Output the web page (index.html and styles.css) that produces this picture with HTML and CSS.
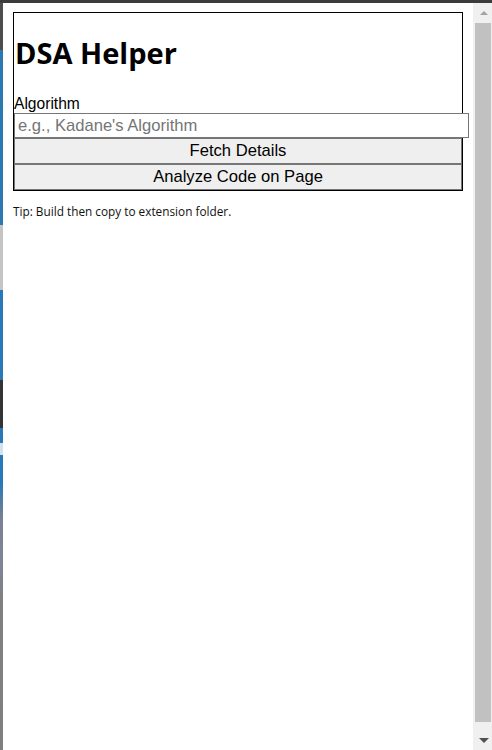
FILE: index.html
```html
<!DOCTYPE html>
<html lang="en">
<head>
<meta charset="utf-8">
<title>DSA Helper</title>
<link rel="stylesheet" href="styles.css">
</head>
<body>
<div class="frame">
  <div class="edge"></div>
  <div class="window">
    <div class="backdrop"></div>
    <main class="popup">
      <div class="panel">
        <h1 class="title">DSA Helper</h1>
        <label class="field-label" for="algo">Algorithm</label>
        <input class="field-input" id="algo" type="text" placeholder="e.g., Kadane's Algorithm">
        <button class="action" type="button">Fetch Details</button>
        <button class="action" type="button">Analyze Code on Page</button>
      </div>
      <p class="tip">Tip: Build then copy to extension folder.</p>
    </main>
    <div class="scrollbar">
      <div class="scroll-btn"><span class="arrow-up"></span></div>
      <div class="thumb"></div>
      <div class="scroll-gap"></div>
      <div class="scroll-btn"><span class="arrow-down"></span></div>
    </div>
  </div>
</div>
</body>
</html>
```

FILE: styles.css
```css
html, body {
  margin: 0;
  padding: 0;
  background: #ffffff;
}

.frame {
  width: 492px;
  height: 750px;
  display: flex;
  flex-direction: column;
  overflow: hidden;
}

.edge {
  height: 3px;
  background: #3c3c3c;
  flex: none;
}

.window {
  flex: 1;
  display: flex;
  min-height: 0;
}

.backdrop {
  width: 3px;
  flex: none;
  background: linear-gradient(to bottom,
    #4d4d4d 0px, #4d4d4d 47px,
    #2b78b3 47px, #2b78b3 222px,
    #c4c4c4 222px, #c4c4c4 287px,
    #2a79b6 287px, #2a79b6 377px,
    #343434 377px, #343434 425px,
    #2a79b6 425px, #2a79b6 440px,
    #cfe2ef 440px, #cfe2ef 452px,
    #2a79b6 452px, #2a79b6 480px,
    #7b8190 517px, #7e8596 560px,
    #808080 600px, #7f7f7f 747px);
}

.popup {
  flex: 1;
  min-width: 0;
  padding: 9px 10px 0 10px;
  background: #ffffff;
}

.panel {
  border: 1px solid #000000;
  display: flex;
  flex-direction: column;
  align-items: flex-start;
}

.title {
  font-family: "Open Sans", "Noto Sans", sans-serif;
  font-weight: 700;
  font-size: 29px;
  line-height: 36px;
  margin: 22px 0 24px 1px;
  color: #000000;
}

.field-label {
  font-family: "Liberation Sans", Arial, sans-serif;
  font-size: 15.6px;
  line-height: 18px;
  color: #000000;
}

.field-input {
  box-sizing: border-box;
  width: 455px;
  flex: none;
  height: 25px;
  margin: 0;
  padding: 1px 2px 1px 3px;
  border: 1px solid #767676;
  font-family: "Liberation Sans", Arial, sans-serif;
  font-size: 16.6px;
  color: #000000;
  background: #ffffff;
  outline: none;
}

.field-input::placeholder {
  color: #757575;
}

.action {
  box-sizing: border-box;
  width: 100%;
  height: 26px;
  margin: 0;
  padding: 0 6px;
  border: 1px solid #767676;
  border-radius: 0;
  background: #efefef;
  font-family: "Liberation Sans", Arial, sans-serif;
  font-size: 16.6px;
  color: #000000;
}

.tip {
  margin: 12px 0 0 0;
  font-family: "Open Sans", "Noto Sans", sans-serif;
  font-size: 11.8px;
  line-height: 16px;
  color: #111111;
}

.scrollbar {
  width: 19px;
  flex: none;
  background: #f0f0f0;
  display: flex;
  flex-direction: column;
}

.scroll-btn {
  height: 20px;
  flex: none;
  display: flex;
  align-items: center;
  justify-content: center;
  padding-left: 2px;
}

.arrow-up {
  width: 0;
  height: 0;
  border-left: 4px solid transparent;
  border-right: 4px solid transparent;
  border-bottom: 4px solid #a3a3a3;
}

.arrow-down {
  width: 0;
  height: 0;
  border-left: 5px solid transparent;
  border-right: 5px solid transparent;
  border-top: 5px solid #505050;
}

.thumb {
  height: 699px;
  flex: none;
  margin: 0 1px 0 2px;
  background: #c1c1c1;
}

.scroll-gap {
  flex: 1;
}
```
